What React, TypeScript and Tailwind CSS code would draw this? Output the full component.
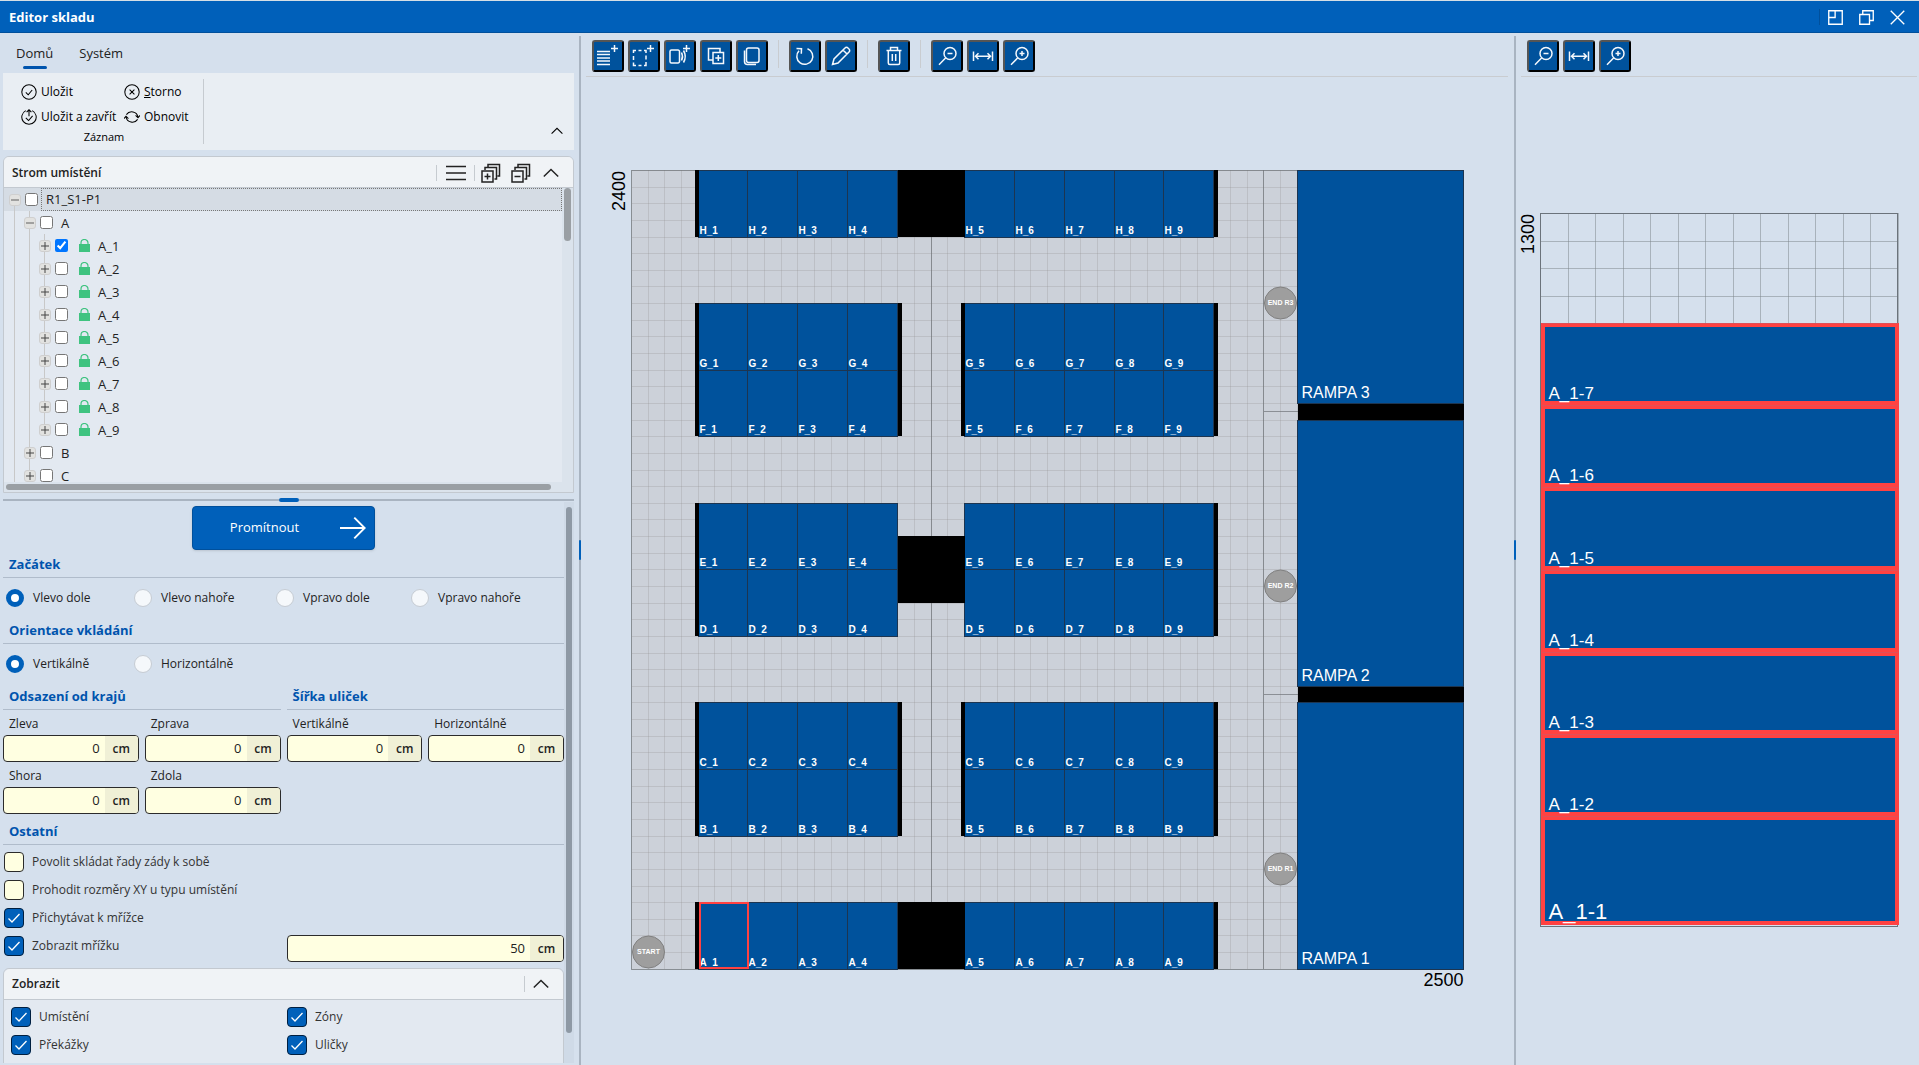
import { useState, type ReactNode } from 'react';

const SANS = "font-['Open_Sans','Noto_Sans',sans-serif]";
const ARIAL = "font-['Liberation_Sans',Arial,sans-serif]";

/* ---------- icons ---------- */

const plusTop = 'M22.5 5v7M19 8.5h7';
const lens = 'M25 13.5a6 6 0 1 1-12 0a6 6 0 0 1 12 0ZM14.8 17.8L8 24.7';

const toolIcons: Record<string, string> = {
    rows: `M5 11.5h13M5 14.5h13M5 18h13M5 21h13M5 24.5h13${plusTop}`,
    zone: `M5.5 13v-2.500h2.500M10.500 10.500h3M16 10.500h2v2.500M18 15.500v4M18 22v3.500h-2M13.500 25.500h-3M8 25.500h-2.500v-3M5.500 20v-4${plusTop}`,
    aisle: `M7.500 10h6.500a1.500 1.500 0 0 1 1.500 1.500v10a1.500 1.500 0 0 1-1.500 1.500h-6.500a1.500 1.500 0 0 1-1.500-1.500v-10a1.500 1.500 0 0 1 1.500-1.500ZM17.500 12.500q2 4 0 8M19.500 10.500q3.500 6 0 12${plusTop}`,
    duplicate: 'M12.500 20h-4v-11.500h11.500v4M13 12.500h10.500v11h-10.500ZM18.300 15v6M15.300 18h6',
    copy: 'M12.500 8h8.500a2 2 0 0 1 2 2v10.500a2 2 0 0 1-2 2h-8.500a2 2 0 0 1-2-2v-10.500a2 2 0 0 1 2-2ZM8.500 10.500v11a3 3 0 0 0 3 3h8.500',
    rotate: 'M18.500 8.800a8 8 0 1 1-8.500 2M7.500 8.500l5 .200l-.200 5',
    edit: 'M7.500 24.500l1.500-5.500l11-11a2 2 0 0 1 3 0l1 1a2 2 0 0 1 0 3l-11 11ZM18 10l4 4',
    trash: 'M8.500 10.500h15M12.500 10v-2.500h7v2.500M10.300 10.500v12.500a1.500 1.500 0 0 0 1.500 1.500h8.400a1.500 1.500 0 0 0 1.500-1.500v-12.500M14.300 14v7M17.700 14v7',
    zoomOut: `${lens}M16.500 13.500h5`,
    fit: 'M6.500 11.500v9.500M25.500 11.500v9.500M8.500 16.300h15M11.500 13.300l-3 3l3 3M20.500 13.300l3 3l-3 3',
    zoomIn: `${lens}M16.500 13.500h5M19 11v5`,
};

function ToolButton({ icon, label }: { icon: string; label: string }) {
    return (
        <button
            aria-label={label}
            title={label}
            className="size-8 rounded-[3px] border-2 border-t-[#555] border-l-[#555] border-r-black border-b-black bg-[#00529c]"
        >
            <svg viewBox="2 2 28 28" className="size-7" fill="none" stroke="#f4f8fc" strokeWidth="1.5">
                <path d={toolIcons[icon]} />
            </svg>
        </button>
    );
}

function Divider() {
    return <span className="mx-[6px] h-7 w-px self-start bg-[#c9ccd0]" />;
}

function LineIcon({ d, className, width = 1.5 }: { d: string; className: string; width?: number }) {
    return (
        <svg viewBox="0 0 20 20" className={className} fill="none" stroke="currentColor" strokeWidth={width}>
            <path d={d} />
        </svg>
    );
}

const circle = 'M19 10a9 9 0 1 1-18 0a9 9 0 0 1 18 0Z';
const chevronUp = 'M1 14.500l9-9l9 9';

/* ---------- location tree ---------- */

interface TreeRow {
    label: string;
    depth: number;
    open?: boolean;
    checked?: boolean;
    locked?: boolean;
    last?: boolean;
}

const treeRows: TreeRow[] = [
    { label: 'R1_S1-P1', depth: 0, open: true },
    { label: 'A', depth: 1, open: true },
    ...[1, 2, 3, 4, 5, 6, 7, 8, 9].map(n => ({
        label: `A_${n}`,
        depth: 2,
        checked: n === 1,
        locked: true,
        last: n === 9,
    })),
    { label: 'B', depth: 1 },
    { label: 'C', depth: 1 },
];

function TreeItem({ row }: { row: TreeRow }) {
    const root = row.depth === 0;
    return (
        <li className={`flex h-[23px] items-center pl-[3px] ${root ? 'bg-[#d5dce4]' : ''}`}>
            {Array.from({ length: row.depth }, (_, i) => (
                <span key={i} className="flex h-full w-[15px] justify-center">
                    <span className="w-px bg-[#c8c8c8]" />
                </span>
            ))}
            <span className="flex h-full w-[15px] flex-col items-center">
                <span className={`w-px flex-1 ${root ? '' : 'bg-[#c8c8c8]'}`} />
                <button
                    aria-label={row.open ? 'Sbalit' : 'Rozbalit'}
                    className="flex size-3 items-center justify-center rounded-[3px] border border-[#cfcfcf] bg-[#e2e2e0] text-[#444]"
                >
                    <svg viewBox="0 0 8 8" className="size-2" stroke="currentColor" fill="none">
                        {row.open
                            ? <path d="M0 4h8" stroke="#8a8a8a" strokeWidth="1.6" />
                            : <path d="M0 4h8M4 0v8" />}
                    </svg>
                </button>
                <span className={`w-px flex-1 ${row.last ? '' : 'bg-[#c8c8c8]'}`} />
            </span>
            <label className="flex h-full flex-1 items-center pl-[3px]">
                <input type="checkbox" defaultChecked={row.checked} className="size-[13px]" />
                {row.locked && (
                    <svg viewBox="0 0 11 13" className="ml-[11px] h-[13px] w-[11px]">
                        <path d="M0 5h11v8h-11Z" fill="#3fc380" />
                        <path d="M2 5.500v-1.500a3.500 3.500 0 0 1 7 0v1.500" fill="none" stroke="#3fc380" strokeWidth="1.2" />
                    </svg>
                )}
                <span
                    className={root
                        ? 'ml-[3px] flex h-full flex-1 items-center border border-dotted border-[#777] pl-1'
                        : 'ml-2 leading-3'}
                >
                    {row.label}
                </span>
            </label>
        </li>
    );
}

/* ---------- form parts ---------- */

function Heading({ children }: { children: ReactNode }) {
    return (
        <h3 className="flex h-7 items-center border-b border-[#b0bccb] pt-[2px] pl-[6px] text-[13px] font-bold text-[#0054ad]">
            {children}
        </h3>
    );
}

function Radio({ name, label, checked, className }: { name: string; label: string; checked?: boolean; className: string }) {
    return (
        <label className={`flex items-center gap-[9px] ${className}`}>
            <input
                type="radio"
                name={name}
                defaultChecked={checked}
                className="size-[18px] appearance-none rounded-full border border-[#c6ccd3] bg-[#f5f8fb] checked:border-5 checked:border-[#0060ba] checked:bg-white"
            />
            {label}
        </label>
    );
}

function Check({ label, checked }: { label?: string; checked?: boolean }) {
    return (
        <label className="flex h-7 items-center gap-2 text-[#333]">
            <span className="grid size-5">
                <input
                    type="checkbox"
                    defaultChecked={checked}
                    className="peer col-start-1 row-start-1 size-5 appearance-none rounded-[4px] border border-[#2b2b2b] bg-[#ffffe1] checked:border-[#001f40] checked:bg-[#0060ba]"
                />
                <svg
                    viewBox="0 0 20 20"
                    className="pointer-events-none invisible col-start-1 row-start-1 size-5 peer-checked:visible"
                    fill="none"
                    stroke="#fff"
                    strokeWidth="1.3"
                >
                    <path d="M4.500 10.500l3.500 3.500l7.500-8" />
                </svg>
            </span>
            {label}
        </label>
    );
}

function CmInput({ value, label }: { value: string; label?: string }) {
    return (
        <span className="flex h-[27px] overflow-hidden rounded-[4px] border border-[#2b2b2b] bg-[#ffffe1] text-[13px]">
            <input
                defaultValue={value}
                aria-label={label}
                className="w-0 min-w-0 flex-1 pr-[5px] text-right text-[#222] outline-none"
            />
            <span className="flex w-[33px] items-center justify-center bg-[#f0f0d6] text-xs font-semibold">cm</span>
        </span>
    );
}

function Field({ label, value }: { label: string; value: string }) {
    return (
        <label className="flex flex-1 flex-col">
            <span className="flex h-[25px] items-center pt-[2px] pl-[6px]">{label}</span>
            <CmInput value={value} />
        </label>
    );
}

/* ---------- warehouse plan, sizes in cm ---------- */

const PLAN = 832 / 2500;
const cm = (v: number) => Math.round(v * PLAN);

const rackRows = [
    { name: 'H', y: 0 },
    { name: 'G', y: 400 },
    { name: 'F', y: 600 },
    { name: 'E', y: 1000 },
    { name: 'D', y: 1200 },
    { name: 'C', y: 1600 },
    { name: 'B', y: 1800 },
    { name: 'A', y: 2200 },
];

const obstacles = [
    // x, y, width, height
    [190, 0, 10, 200], [1750, 0, 10, 200], [800, 0, 200, 200],
    [190, 400, 10, 400], [800, 400, 10, 400], [990, 400, 10, 400], [1750, 400, 10, 400],
    [190, 1000, 10, 400], [1750, 1000, 10, 400], [800, 1100, 200, 200],
    [190, 1600, 10, 400], [800, 1600, 10, 400], [990, 1600, 10, 400], [1750, 1600, 10, 400],
    [190, 2200, 10, 200], [1750, 2200, 10, 200], [800, 2200, 200, 200],
    [2000, 700, 500, 50], [2000, 1550, 500, 50],
];

const ramps = [
    { name: 'RAMPA 3', y: 0, h: 700 },
    { name: 'RAMPA 2', y: 750, h: 800 },
    { name: 'RAMPA 1', y: 1600, h: 800 },
];

const points = [
    { name: 'START', x: 50, y: 2350 },
    { name: 'END R3', x: 1950, y: 400 },
    { name: 'END R2', x: 1950, y: 1250 },
    { name: 'END R1', x: 1950, y: 2100 },
];

const range = (n: number) => Array.from({ length: n }, (_, i) => i);

function WarehousePlan() {
    return (
        <svg viewBox="-50 -93 932 988" className={`h-full w-full ${ARIAL}`} shapeRendering="crispEdges">
            <rect x="0" y="0" width="832" height="799" fill="#ccd1d9" />
            <g stroke="#8c8c8c" strokeOpacity="0.25">
                {range(51).map(i => <path key={i} d={`M${cm(i * 50)} 0V799`} />)}
                {range(49).map(i => <path key={i} d={`M0 ${cm(i * 50)}H832`} />)}
            </g>
            <g stroke="#6f7478" strokeOpacity="0.7" fill="none">
                <path d={`M${cm(900)} 0V799M${cm(1900)} 0V799M${cm(1900)} ${cm(725)}H832M${cm(1900)} ${cm(1575)}H832`} />
                <path d="M0 0H832V799H0Z" />
            </g>
            {rackRows.map(row =>
                range(9).map(i => {
                    const x = i < 4 ? 200 + i * 150 : 1000 + (i - 4) * 150;
                    return (
                        <g key={row.name + i}>
                            <rect
                                x={cm(x)}
                                y={cm(row.y)}
                                width={cm(x + 150) - cm(x)}
                                height={cm(row.y + 200) - cm(row.y)}
                                fill="#00529c"
                                stroke="#1d3550"
                            />
                            <text x={cm(x) + 1} y={cm(row.y + 200) - 3} fontSize="10" fontWeight="700" fill="#fff">
                                {`${row.name}_${i + 1}`}
                            </text>
                        </g>
                    );
                })
            )}
            {obstacles.map(([x, y, w, h]) => (
                <rect key={`${x}-${y}`} x={cm(x)} y={cm(y)} width={cm(x + w) - cm(x)} height={cm(y + h) - cm(y)} />
            ))}
            <rect x={cm(200) + 1} y={cm(2200) + 1} width="48" height="65" fill="none" stroke="#ff4242" strokeWidth="2" />
            {ramps.map(r => (
                <g key={r.name}>
                    <rect x={cm(2000)} y={cm(r.y)} width={cm(500)} height={cm(r.y + r.h) - cm(r.y)} fill="#00529c" stroke="#1d3550" />
                    <text x={cm(2000) + 4} y={cm(r.y + r.h) - 5} fontSize="16" fill="#fff">{r.name}</text>
                </g>
            ))}
            {points.map(p => (
                <g key={p.name} textAnchor="middle">
                    <circle
                        cx={cm(p.x)}
                        cy={cm(p.y)}
                        r="16"
                        fill="#9e9e9e"
                        stroke="#808080"
                        shapeRendering="geometricPrecision"
                    />
                    <text x={cm(p.x)} y={cm(p.y) + 2} fontSize="7" fontWeight="700" fill="#fff">{p.name}</text>
                </g>
            ))}
            <text x="832" y="816" fontSize="18" textAnchor="end">2500</text>
            <text transform="translate(-7 1) rotate(-90)" fontSize="18" textAnchor="end">2400</text>
        </svg>
    );
}

/* ---------- rack side view ---------- */

const levels = [
    { name: 'A_1-7', y: 110, h: 82, size: 17 },
    { name: 'A_1-6', y: 192, h: 82, size: 17 },
    { name: 'A_1-5', y: 274, h: 83, size: 17 },
    { name: 'A_1-4', y: 357, h: 82, size: 17 },
    { name: 'A_1-3', y: 439, h: 82, size: 17 },
    { name: 'A_1-2', y: 521, h: 82, size: 17 },
    { name: 'A_1-1', y: 603, h: 109, size: 22 },
];

function RackView() {
    return (
        <svg viewBox="-24 -136 402 988" className={`h-full w-full ${ARIAL}`} shapeRendering="crispEdges">
            <g stroke="#7c838a" strokeOpacity="0.5">
                {range(14).map(i => <path key={i} d={`M${Math.round(i * 27.5)} 0V712`} />)}
                {range(5).map(i => <path key={i} d={`M0 ${Math.round(i * 27.5)}H357`} />)}
            </g>
            <rect x="0" y="0" width="357" height="713" fill="none" stroke="#6b737b" />
            {levels.map(l => (
                <g key={l.name}>
                    <rect x="2" y={l.y + 2} width="354" height={l.h - 4} fill="#00529c" stroke="#ff4242" strokeWidth="4" />
                    <path d={`M1 ${l.y}H357`} stroke="#e05058" />
                    <text x="8" y={l.y + l.h - 6} fontSize={l.size} fill="#fff">{l.name}</text>
                </g>
            ))}
            <text transform="translate(-7 1) rotate(-90)" fontSize="18" textAnchor="end">1300</text>
        </svg>
    );
}

/* ---------- page ---------- */

function Splitter() {
    return (
        <div className="mt-[3px] flex w-full flex-col items-center bg-[#a9b4c1] pt-[504px]">
            <span className="h-5 w-full rounded-sm bg-[#0060ba]" />
        </div>
    );
}

const ribbonButton = 'flex items-center gap-1 whitespace-nowrap';

export default function App() {
    const [tab, setTab] = useState('Domů');

    return (
        <div className={`flex h-screen flex-col overflow-hidden bg-[#d5e0ed] text-xs text-[#222] ${SANS}`}>
            <header className="flex h-[33px] shrink-0 items-center border-t border-b border-t-[#d5dfe6] border-b-[#00509c] bg-[#0060ba] pt-px pr-[14px] pl-[9px] text-white">
                <h1 className="flex-1 pt-px text-[13px] font-bold">Editor skladu</h1>
                <span className="mr-2 h-4 w-px bg-[#00509c]" />
                <div className="flex items-center gap-4">
                    <button aria-label="Ukotvit">
                        <LineIcon className="size-[15px]" width={1.8} d="M1 1h18v18h-18ZM9.500 1v9h-8.500" />
                    </button>
                    <button aria-label="Obnovit okno">
                        <LineIcon className="size-[15px]" width={1.8} d="M1 6h13v13h-13ZM5 6v-5h14v13h-5" />
                    </button>
                    <button aria-label="Zavřít">
                        <LineIcon className="size-[15px]" width={1.8} d="M1 1l18 18M19 1l-18 18" />
                    </button>
                </div>
            </header>

            <div className="grid min-h-0 flex-1 grid-cols-[579fr_2px_933fr_2px_403fr]">
                <aside className="flex min-h-0 min-w-0 flex-col pr-[5px] pl-[3px]">
                    <nav className="flex h-10 shrink-0 items-start gap-[26px] pt-3 pl-[13px] text-[13px]">
                        {['Domů', 'Systém'].map(t => (
                            <button key={t} onClick={() => setTab(t)} className="flex flex-col items-center gap-1">
                                {t}
                                {tab === t && <span className="h-[3px] w-6 rounded-sm bg-[#0054ad]" />}
                            </button>
                        ))}
                    </nav>

                    <div className="flex h-[77px] shrink-0 items-stretch bg-[#e9eef3] pr-[11px] pl-[18px] text-black">
                        <div className="flex w-[182px] flex-col pt-[7px]">
                            <div className="grid grid-cols-[103px_1fr]">
                                <button className={`h-6 ${ribbonButton}`}>
                                    <LineIcon className="size-4" width={1.3} d={`${circle}M6 10.500l3 3l5-6`} />
                                    Uložit
                                </button>
                                <button className={`h-6 ${ribbonButton}`}>
                                    <LineIcon className="size-4" width={1.3} d={`${circle}M7 7l6 6M13 7l-6 6`} />
                                    <span><u>S</u>torno</span>
                                </button>
                                <button className={`h-[25px] ${ribbonButton}`}>
                                    <LineIcon className="size-4" width={1.3} d="M6 2a9 9 0 1 0 8 0M10 1v8M7 4l3-3l3 3M6 11l3.500 3.500l5-6" />
                                    Uložit a zavřít
                                </button>
                                <button className={`h-[25px] ${ribbonButton}`}>
                                    <LineIcon className="size-4" width={1.3} d="M3 7a8 8 0 0 1 14.500 3M17 13a8 8 0 0 1-14.500-3M0 12l2.500-3l3 3M14.500 8l3 3l2.500-3" />
                                    Obnovit
                                </button>
                            </div>
                            <span className="pr-4 text-center text-[11px] leading-4">Záznam</span>
                        </div>
                        <span className="my-[6px] w-px bg-[#c6cbd0]" />
                        <button aria-label="Sbalit pás karet" className="mb-[13px] ml-auto self-end">
                            <LineIcon className="size-3" width={1.8} d={chevronUp} />
                        </button>
                    </div>

                    <section className="mt-[6px] flex h-[337px] shrink-0 flex-col overflow-hidden rounded-t-md border border-[#c3c9d0] bg-[#e3e9f1]">
                        <header className="flex h-[31px] shrink-0 items-center border-b border-[#c3c9d0] bg-[#f0f3f6] pt-px pr-[14px] pl-2 text-[#222]">
                            <h2 className="flex-1 font-semibold">Strom umístění</h2>
                            <span className="h-4 w-px bg-[#c6cbd0]" />
                            <button aria-label="Nabídka" className="ml-[9px]">
                                <LineIcon className="size-5" d="M0 3.500h20M0 10h20M0 16.500h20" />
                            </button>
                            <span className="ml-2 h-4 w-px bg-[#c6cbd0]" />
                            <button aria-label="Rozbalit vše" className="ml-[6px]">
                                <LineIcon className="size-5" d="M1 8h11v11h-11ZM6.500 10.500v6M3.500 13.500h6M4 7v-2.500h11.500v11.500h-2M7 4v-2.500h11.500v11.500h-2" />
                            </button>
                            <button aria-label="Sbalit vše" className="ml-[10px]">
                                <LineIcon className="size-5" d="M1 8h11v11h-11ZM3.500 13.500h6M4 7v-2.500h11.500v11.500h-2M7 4v-2.500h11.500v11.500h-2" />
                            </button>
                            <button aria-label="Sbalit panel" className="ml-3">
                                <LineIcon className="size-4" width={1.8} d={chevronUp} />
                            </button>
                        </header>
                        <div className="flex min-h-0 flex-1">
                            <ul className="min-w-0 flex-1 overflow-hidden text-[13px]">
                                {treeRows.map(row => <TreeItem key={row.label} row={row} />)}
                            </ul>
                            <div className="w-[11px] bg-[#dbe3ec] px-[2px]">
                                <div className="h-[53px] rounded-full bg-[#9a9fa4]" />
                            </div>
                        </div>
                        <div className="flex h-[10px] shrink-0 items-center bg-[#dbe3ec] pr-[22px] pl-[2px]">
                            <div className="h-[6px] flex-1 rounded-full bg-[#9a9fa4]" />
                        </div>
                    </section>

                    <div className="mt-1 flex h-[5px] shrink-0 items-center">
                        <span className="h-[2px] flex-1 bg-[#a9b4c1]" />
                        <span className="h-1 w-5 rounded-sm bg-[#0060ba]" />
                        <span className="h-[2px] flex-1 bg-[#a9b4c1]" />
                    </div>

                    <div className="mb-[2px] flex min-h-0 flex-1">
                        <form className="min-w-0 flex-1 overflow-hidden pt-1">
                            <button
                                type="button"
                                className="mx-auto flex h-11 w-[183px] items-center rounded-[4px] border border-[#00509c] bg-[#0060ba] pr-2 text-[13px] text-white shadow-sm"
                            >
                                <span className="flex-1 pr-1 text-center">Promítnout</span>
                                <LineIcon className="size-[26px]" d="M0 10h19M11 2l8 8l-8 8" />
                            </button>

                            <Heading>Začátek</Heading>
                            <div className="flex h-[38px] items-center pt-[2px] pl-[3px]">
                                <Radio name="start" label="Vlevo dole" checked className="w-32" />
                                <Radio name="start" label="Vlevo nahoře" className="w-[142px]" />
                                <Radio name="start" label="Vpravo dole" className="w-[135px]" />
                                <Radio name="start" label="Vpravo nahoře" className="flex-1" />
                            </div>

                            <Heading>Orientace vkládání</Heading>
                            <div className="flex h-[38px] items-center pt-[2px] pl-[3px]">
                                <Radio name="orientation" label="Vertikálně" checked className="w-32" />
                                <Radio name="orientation" label="Horizontálně" className="flex-1" />
                            </div>

                            <div className="grid grid-cols-2 gap-x-[6px]">
                                <Heading>Odsazení od krajů</Heading>
                                <Heading>Šířka uliček</Heading>
                                <div className="flex gap-[6px]">
                                    <Field label="Zleva" value="0" />
                                    <Field label="Zprava" value="0" />
                                </div>
                                <div className="flex gap-[6px]">
                                    <Field label="Vertikálně" value="0" />
                                    <Field label="Horizontálně" value="0" />
                                </div>
                                <div className="flex gap-[6px]">
                                    <Field label="Shora" value="0" />
                                    <Field label="Zdola" value="0" />
                                </div>
                            </div>

                            <div className="mt-[3px]">
                                <Heading>Ostatní</Heading>
                            </div>
                            <div className="flex flex-col pt-[3px] pl-px">
                                <Check label="Povolit skládat řady zády k sobě" />
                                <Check label="Prohodit rozměry XY u typu umístění" />
                                <Check label="Přichytávat k mřížce" checked />
                            </div>
                            <div className="grid grid-cols-2 items-start gap-x-[6px]">
                                <div className="pl-px">
                                    <Check label="Zobrazit mřížku" checked />
                                </div>
                                <div className="pt-[3px]">
                                    <CmInput value="50" label="Rozteč mřížky" />
                                </div>
                            </div>

                            <section className="mt-[6px] rounded-t-md border border-[#c3c9d0] bg-[#e3e9f1]">
                                <header className="flex h-[31px] items-center rounded-t-md border-b border-[#c3c9d0] bg-[#f0f3f6] pr-[14px] pl-2 text-[#222]">
                                    <h2 className="flex-1 font-semibold">Zobrazit</h2>
                                    <span className="mr-2 h-4 w-px bg-[#c6cbd0]" />
                                    <button type="button" aria-label="Sbalit panel">
                                        <LineIcon className="size-4" width={1.8} d={chevronUp} />
                                    </button>
                                </header>
                                <div className="grid grid-cols-2 pt-[3px] pl-[7px]">
                                    <Check label="Umístění" checked />
                                    <Check label="Zóny" checked />
                                    <Check label="Překážky" checked />
                                    <Check label="Uličky" checked />
                                    <Check checked />
                                    <Check />
                                </div>
                            </section>
                        </form>
                        <div className="w-[10px] bg-[#cfdae7] px-[2px] pt-[5px]">
                            <div className="h-[526px] rounded-full bg-[#8e99a5]" />
                        </div>
                    </div>
                </aside>

                <Splitter />

                <main className="flex min-h-0 min-w-0 flex-col">
                    <div className="mr-[6px] ml-[5px] flex h-11 shrink-0 items-start gap-1 border-b border-[#c9ccd0] pt-[7px] pl-[6px]">
                        <ToolButton icon="rows" label="Přidat řadu" />
                        <ToolButton icon="zone" label="Přidat zónu" />
                        <ToolButton icon="aisle" label="Přidat uličku" />
                        <ToolButton icon="duplicate" label="Duplikovat" />
                        <ToolButton icon="copy" label="Kopírovat" />
                        <Divider />
                        <ToolButton icon="rotate" label="Otočit" />
                        <ToolButton icon="edit" label="Upravit" />
                        <Divider />
                        <ToolButton icon="trash" label="Smazat" />
                        <Divider />
                        <ToolButton icon="zoomOut" label="Oddálit" />
                        <ToolButton icon="fit" label="Přizpůsobit" />
                        <ToolButton icon="zoomIn" label="Přiblížit" />
                    </div>
                    <div className="min-h-0 flex-1">
                        <WarehousePlan />
                    </div>
                </main>

                <Splitter />

                <section className="flex min-h-0 min-w-0 flex-col">
                    <div className="mr-[2px] ml-[5px] flex h-11 shrink-0 items-start gap-1 border-b border-[#c9ccd0] pt-[7px] pl-[6px]">
                        <ToolButton icon="zoomOut" label="Oddálit" />
                        <ToolButton icon="fit" label="Přizpůsobit" />
                        <ToolButton icon="zoomIn" label="Přiblížit" />
                    </div>
                    <div className="min-h-0 flex-1">
                        <RackView />
                    </div>
                </section>
            </div>
        </div>
    );
}
